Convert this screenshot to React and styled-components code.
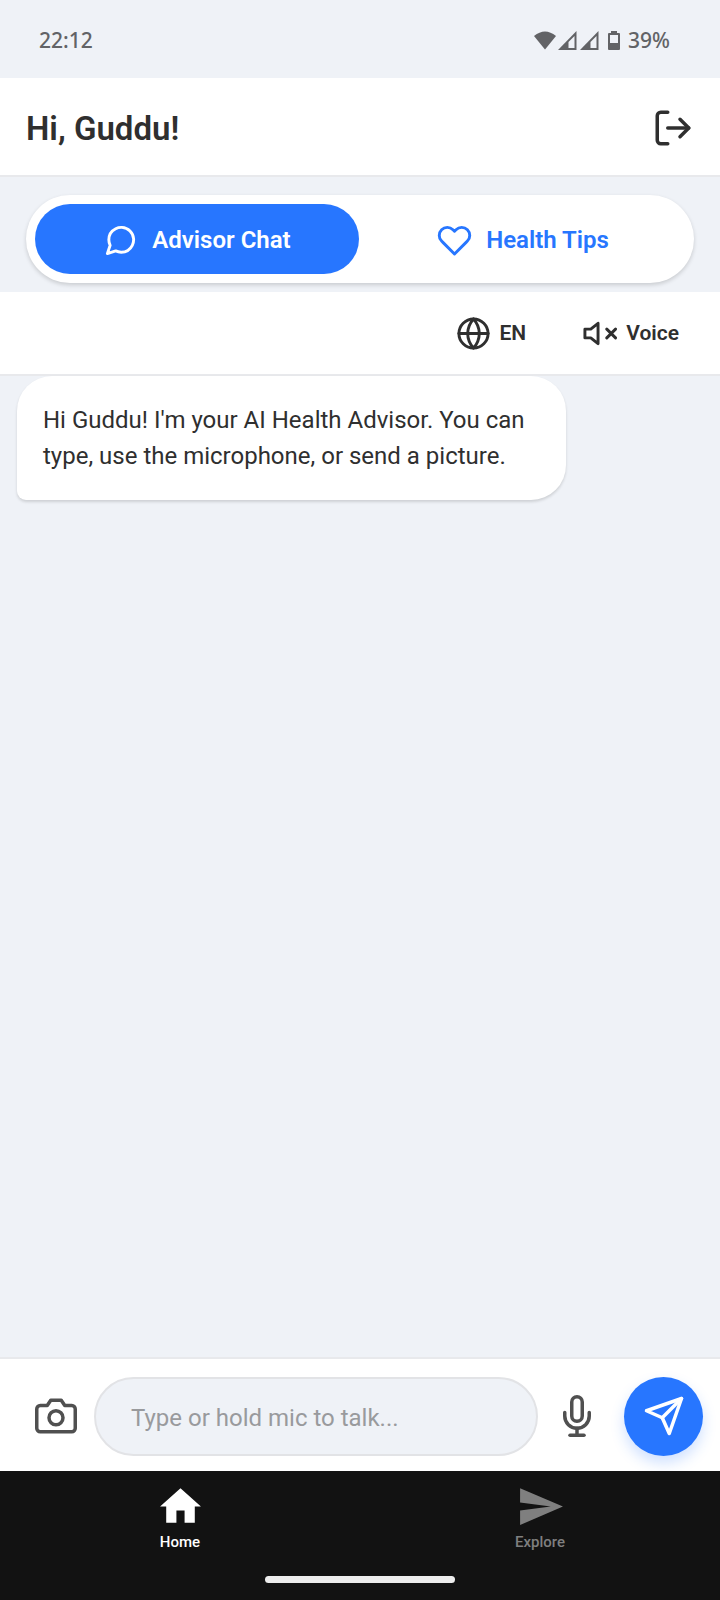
import React, { useState } from "react";
import styled, { createGlobalStyle } from "styled-components";
import {
  FiCamera,
  FiGlobe,
  FiHeart,
  FiLogOut,
  FiMessageCircle,
  FiMic,
  FiSend,
  FiVolumeX,
} from "react-icons/fi";
import { MdHome, MdSend } from "react-icons/md";

const blue = "#2776ff";
const ink = "#2f2f2f";
const canvas = "#eff2f7";
const line = "#e8e9ec";

const GlobalStyle = createGlobalStyle`
  *, *::before, *::after { box-sizing: border-box; }
  body {
    margin: 0;
    background: ${canvas};
    color: ${ink};
    font-family: Roboto, "Liberation Sans", sans-serif;
  }
  button, input { font: inherit; color: inherit; }
  svg { display: block; flex: none; }
`;

const Screen = styled.div`
  display: flex;
  flex-direction: column;
  min-height: 100vh;
`;

const StatusBar = styled.div`
  display: flex;
  align-items: center;
  justify-content: space-between;
  height: 78px;
  padding: 2px 50px 0 39px;
  color: #626366;
  font-family: "Noto Sans", sans-serif;
  font-size: 21px;
  font-weight: 500;
`;

const StatusIcons = styled.div`
  display: flex;
  align-items: center;
  gap: 8px;
`;

const Header = styled.header`
  display: flex;
  align-items: center;
  justify-content: space-between;
  height: 99px;
  padding: 2px 26px 0;
  background: #fff;
  border-bottom: 2px solid ${line};
`;

const Title = styled.h1`
  margin: 0;
  padding-top: 2px;
  font-size: 33px;
  font-weight: 600;
`;

const IconButton = styled.button`
  display: flex;
  align-items: center;
  justify-content: center;
  padding: 0;
  border: 0;
  background: none;
  color: ${(p) => p.$color || ink};
`;

const TabsSection = styled.div`
  padding: 18px 26px 9px;
`;

const Tabs = styled.div`
  display: flex;
  padding: 9px;
  gap: 2px;
  border-radius: 44px;
  background: #fff;
  box-shadow: 0 2px 4px rgba(0, 0, 0, 0.16);
`;

const Tab = styled.button`
  flex: 1;
  display: flex;
  align-items: center;
  justify-content: center;
  gap: 14px;
  height: 70px;
  padding: 2px 0 0;
  border: 0;
  border-radius: 35px;
  background: ${(p) => (p.$active ? blue : "transparent")};
  color: ${(p) => (p.$active ? "#fff" : blue)};
  font-size: 24px;
  font-weight: 600;
`;

const Toolbar = styled.div`
  display: flex;
  align-items: center;
  justify-content: flex-end;
  gap: 28px;
  height: 84px;
  padding: 0 27px;
  background: #fff;
  border-bottom: 2px solid ${line};
`;

const ToolButton = styled.button`
  display: flex;
  align-items: center;
  gap: 9px;
  padding: 14px;
  border: 0;
  background: none;
  font-size: 21px;
  font-weight: 600;
`;

const Messages = styled.main`
  flex: 1;
  padding: 0 17px;
`;

const Bubble = styled.p`
  width: 80%;
  margin: 0;
  padding: 26px;
  border-radius: 35px 35px 35px 9px;
  background: #fff;
  box-shadow: 0 2px 3px rgba(0, 0, 0, 0.14);
  font-size: 24px;
  line-height: 36px;
`;

const Composer = styled.form`
  display: flex;
  align-items: center;
  height: 114px;
  padding: 2px 17px 0;
  background: #fff;
  border-top: 2px solid ${line};
`;

const ComposerButton = styled(IconButton)`
  width: 77px;
  height: 77px;
`;

const Field = styled.input`
  flex: 1;
  min-width: 0;
  height: 79px;
  padding: 4px 35px 0;
  border: 2px solid #e2e3e6;
  border-radius: 40px;
  background: ${canvas};
  font-size: 24px;
  &::placeholder { color: #999a9d; opacity: 1; }
`;

const SendButton = styled(IconButton)`
  width: 79px;
  height: 79px;
  margin-left: 9px;
  border-radius: 50%;
  background: ${blue};
  box-shadow: 0 7px 14px rgba(39, 118, 255, 0.22);
`;

const BottomBar = styled.footer`
  display: flex;
  flex-direction: column;
  align-items: center;
  justify-content: space-between;
  height: 129px;
  padding-bottom: 17px;
  background: #121212;
`;

const Nav = styled.nav`
  display: flex;
  width: 100%;
  padding-top: 11px;
`;

const NavLink = styled.a`
  flex: 1;
  display: flex;
  flex-direction: column;
  align-items: center;
  gap: 1px;
  color: ${(p) => (p.$active ? "#fff" : "#7f7f7f")};
  font-size: 15px;
  line-height: 20px;
  font-weight: 500;
  text-decoration: none;
`;

const HomeIndicator = styled.div`
  width: 190px;
  height: 7px;
  border-radius: 4px;
  background: #ededed;
`;

function SignalGlyphs() {
  return (
    <svg width="66" height="19" viewBox="0 0 66 19" fill="#626366" aria-hidden="true">
      <path d="M0 5Q11-4 22 5L11 18.500Z" />
      {[24, 46].map((x) => (
        <g key={x} transform={`translate(${x} 0)`}>
          <path d="M18.500 0V19H0Z" />
          <path d="M16.500 5V17H10.500V11Z" fill={canvas} />
        </g>
      ))}
    </svg>
  );
}

function BatteryGlyph() {
  return (
    <svg width="12" height="19" viewBox="0 0 12 19" fill="#626366" aria-hidden="true">
      <path d="M3 0h6v2h2q1 0 1 1v15q0 1-1 1H1q-1 0-1-1V3q0-1 1-1h2z" />
      <path d="M2 4h8v8H2z" fill={canvas} />
    </svg>
  );
}

export default function App() {
  const [tab, setTab] = useState("chat");
  return (
    <Screen>
      <GlobalStyle />
      <StatusBar>
        <span>22:12</span>
        <StatusIcons>
          <SignalGlyphs />
          <BatteryGlyph />
          <span>39%</span>
        </StatusIcons>
      </StatusBar>
      <Header>
        <Title>Hi, Guddu!</Title>
        <IconButton type="button" aria-label="Log out">
          <FiLogOut size={42} />
        </IconButton>
      </Header>
      <TabsSection>
        <Tabs>
          <Tab type="button" $active={tab === "chat"} onClick={() => setTab("chat")}>
            <FiMessageCircle size={35} />
            Advisor Chat
          </Tab>
          <Tab type="button" $active={tab === "tips"} onClick={() => setTab("tips")}>
            <FiHeart size={35} />
            Health Tips
          </Tab>
        </Tabs>
      </TabsSection>
      <Toolbar>
        <ToolButton type="button">
          <FiGlobe size={35} />
          EN
        </ToolButton>
        <ToolButton type="button">
          <FiVolumeX size={35} />
          Voice
        </ToolButton>
      </Toolbar>
      <Messages>
        <Bubble>
          Hi Guddu! I'm your AI Health Advisor. You can type, use the microphone, or send a picture.
        </Bubble>
      </Messages>
      <Composer onSubmit={(e) => e.preventDefault()}>
        <ComposerButton type="button" $color="#505050" aria-label="Send a picture">
          <FiCamera size={42} />
        </ComposerButton>
        <Field type="text" aria-label="Message" placeholder="Type or hold mic to talk..." />
        <ComposerButton type="button" $color="#505050" aria-label="Hold to talk">
          <FiMic size={42} />
        </ComposerButton>
        <SendButton type="submit" $color="#fff" aria-label="Send">
          <FiSend size={42} />
        </SendButton>
      </Composer>
      <BottomBar>
        <Nav>
          <NavLink href="#home" $active>
            <MdHome size={49} />
            Home
          </NavLink>
          <NavLink href="#explore">
            <MdSend size={49} />
            Explore
          </NavLink>
        </Nav>
        <HomeIndicator />
      </BottomBar>
    </Screen>
  );
}
